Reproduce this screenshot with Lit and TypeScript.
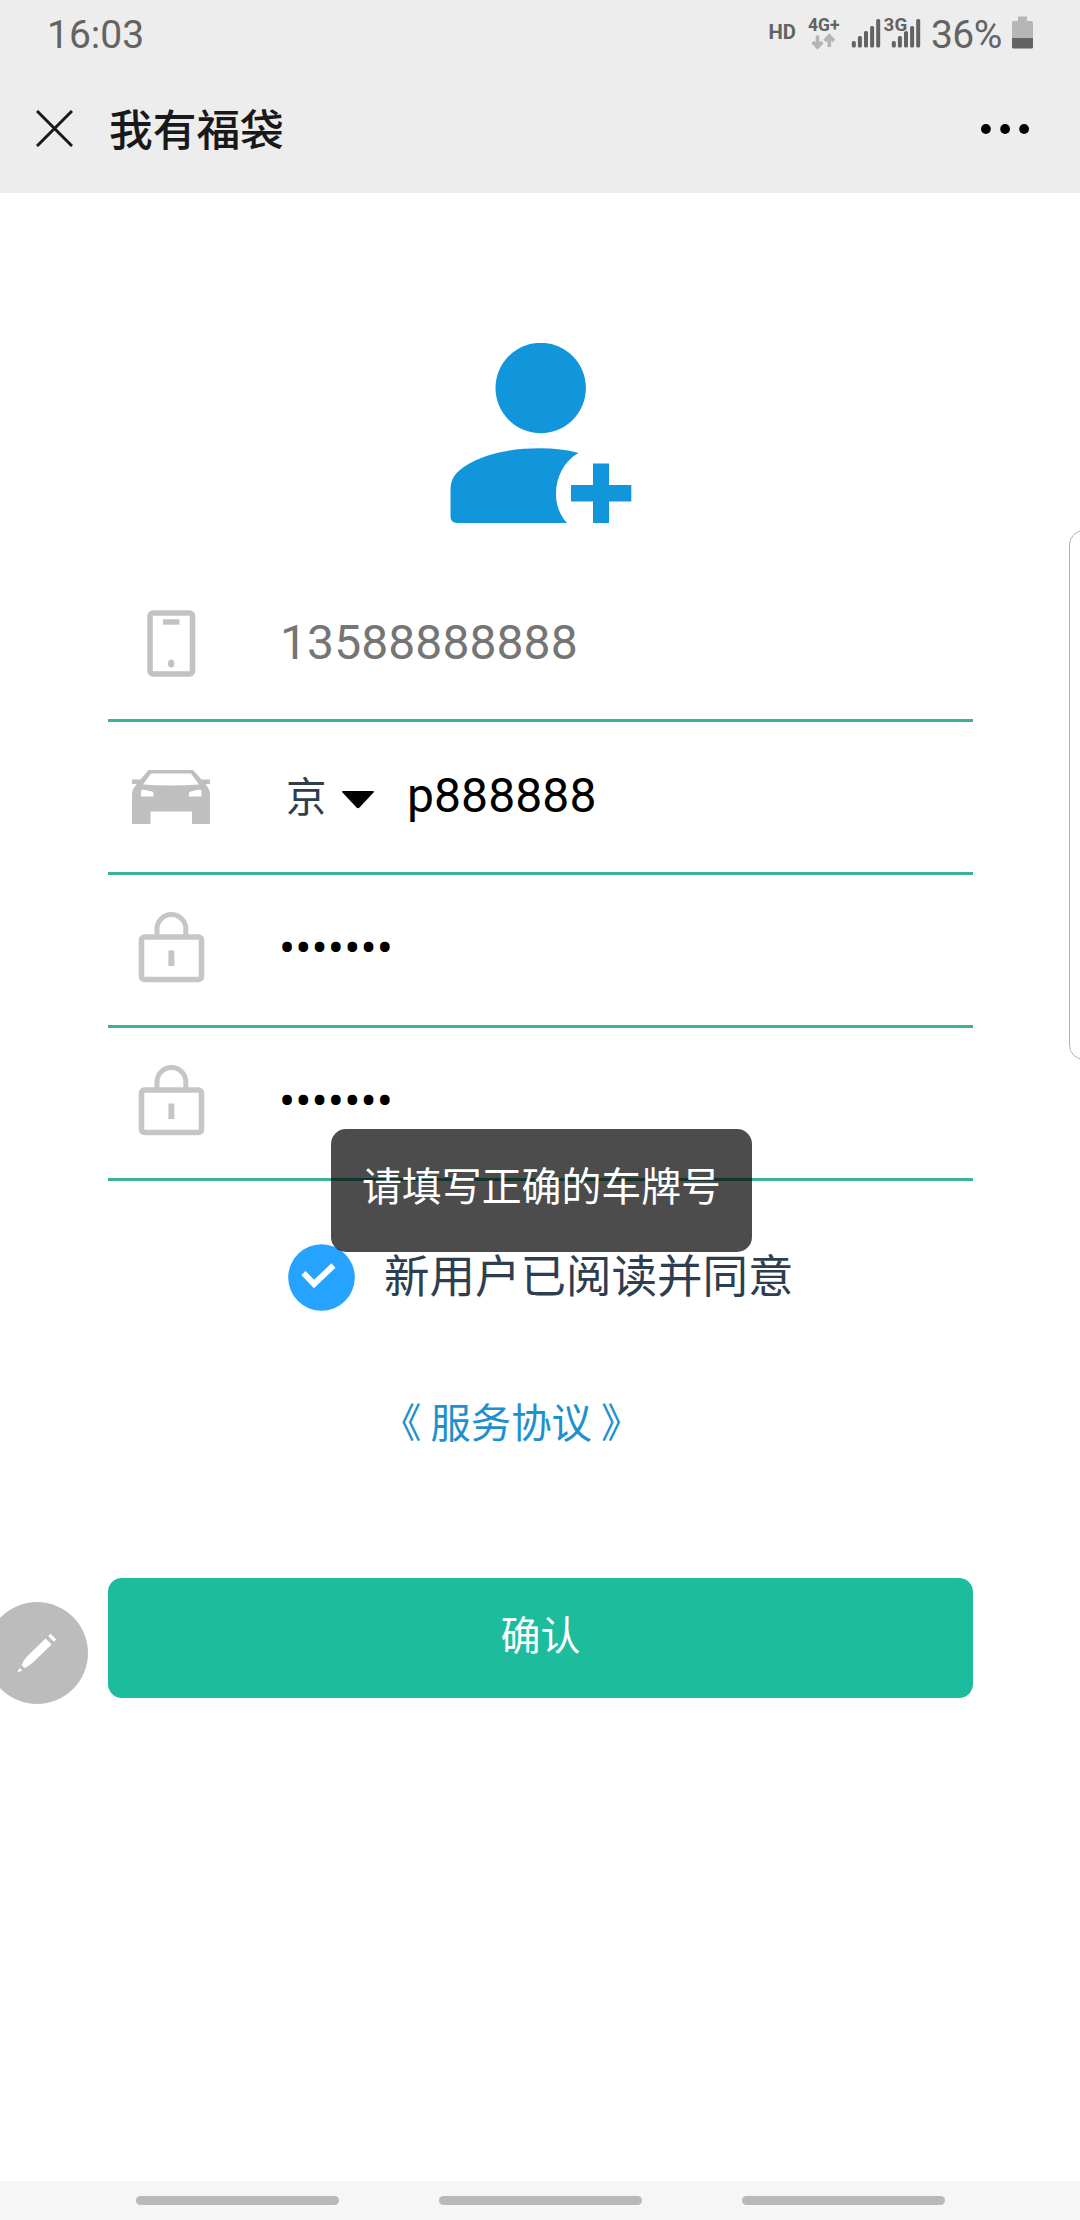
import { LitElement, html, svg, css } from "lit";
import { customElement } from "lit/decorators.js";

const BAR_TOPS = [41, 36, 31, 26, 19];

const signalBars = (x: number) =>
  BAR_TOPS.map(
    (top, i) => svg`<rect x=${x + i * 6.1} y=${top} width="4" height=${47.5 - top} rx="1.6" />`
  );

const phoneIcon = html`<svg class="icon" viewBox="0 0 90 150" fill="none" stroke="#c2c2c2">
  <rect x="24" y="44" width="42.5" height="61" rx="3" stroke-width="5.6" />
  <path d="M37 53h16.5" stroke-width="5.4" />
  <ellipse cx="45.2" cy="94.5" rx="3.2" ry="4" fill="#c2c2c2" stroke="none" />
</svg>`;

const carIcon = html`<svg class="icon" viewBox="0 0 90 150" fill="#bfbfbf">
  <path
    fill-rule="evenodd"
    d="M22.5 48H67L75.5 57.5H84V62H79.5L82.500 66.500Q84 69 84 72V102H66V89.500H24.500V102H6V72Q6 69 7.500 66.500L10.500 62H6V57.500H14.500ZM25 51.500L17 62.500Q30 63.500 45 63.500T73 62.500L65 51.500ZM17 67.500Q15 67.500 15 69.500V74.500H27.500V71.500Q27.500 70 26 69.500ZM73.500 67.500Q75.500 67.500 75.500 69.500V74.500H63V71.500Q63 70 64.500 69.500Z"
  />
</svg>`;

const lockIcon = html`<svg class="icon" viewBox="0 0 90 150" fill="none" stroke="#c6c6c6">
  <rect x="15.5" y="62" width="60" height="42.5" rx="3" stroke-width="5.6" />
  <path d="M31 61V54a14.4 14.4 0 0 1 28.8 0V61" stroke-width="5" />
  <path d="M45.4 75.5V91" stroke-width="6" />
</svg>`;

@customElement("status-bar")
export class StatusBar extends LitElement {
  static styles = css`
    :host {
      display: flex;
      height: 68px;
      padding: 0 47px 0 47px;
      justify-content: space-between;
      font-family: Roboto, sans-serif;
      font-size: 39px;
      line-height: 71px;
      color: #636363;
    }
    .right {
      display: flex;
    }
    .signals {
      width: 160px;
      height: 68px;
      fill: #636363;
    }
    .pct {
      width: 76px;
      margin-left: 5px;
      letter-spacing: -0.6px;
      white-space: nowrap;
    }
    .battery {
      width: 21px;
      height: 68px;
      margin-left: 5px;
    }
  `;

  render() {
    return html`
      <span>16:03</span>
      <div class="right">
        <svg class="signals" viewBox="765 0 160 68" font-family="Roboto, sans-serif" font-weight="700">
          <text x="767.4" y="39" font-size="20" textLength="27.5" lengthAdjust="spacingAndGlyphs">HD</text>
          <text x="807" y="31" font-size="18.2" textLength="31.5" lengthAdjust="spacingAndGlyphs">4G+</text>
          <g fill="none" stroke="#b4b4b4" stroke-width="3.6">
            <path d="M816.5 35.5V46.5M811.8 42L816.5 47L821.2 42" />
            <path d="M828.3 47V36.5M823.6 41L828.3 36L833 41" />
          </g>
          ${signalBars(850.8)} ${signalBars(890.8)}
          <text x="882.6" y="30.6" font-size="18.6" textLength="23.6" lengthAdjust="spacingAndGlyphs" stroke="#ededed" stroke-width="2" paint-order="stroke">3G</text>
        </svg>
        <span class="pct">36%</span>
        <svg class="battery" viewBox="0 0 21 68">
          <path d="M6 16.5H15V21H19.5Q21 21 21 22.5V38H0V22.5Q0 21 1.5 21H6Z" fill="#b6b6b6" />
          <path d="M0 38H21V47Q21 48.5 19.5 48.5H1.5Q0 48.5 0 47Z" fill="#636363" />
        </svg>
      </div>
    `;
  }
}

@customElement("title-bar")
export class TitleBar extends LitElement {
  static styles = css`
    :host {
      display: flex;
      align-items: center;
      height: 121px;
      padding: 0 51px 4px 36px;
    }
    .close {
      width: 37px;
      height: 37px;
    }
    .title {
      flex: 1;
      margin: -3px 0 0 36px;
      font: 500 43.7px/64px "Noto Sans CJK SC", sans-serif;
      color: #191919;
    }
    .more {
      width: 48px;
      height: 10px;
    }
  `;

  render() {
    return html`
      <svg class="close" viewBox="0 0 37 37">
        <path d="M1 1L36 36M36 1L1 36" stroke="#191919" stroke-width="3" />
      </svg>
      <span class="title">我有福袋</span>
      <svg class="more" viewBox="0 0 48 10">
        <circle cx="4.9" cy="5" r="4.9" />
        <circle cx="24.1" cy="5" r="4.9" />
        <circle cx="43.1" cy="5" r="4.9" />
      </svg>
    `;
  }
}

@customElement("app-root")
export class AppRoot extends LitElement {
  static styles = css`
    :host {
      display: flex;
      flex-direction: column;
      position: relative;
      box-sizing: border-box;
      width: 1080px;
      height: 2220px;
      overflow: hidden;
      background: #fff;
      font-family: "Noto Sans CJK SC", sans-serif;
      color: #2c3e50;
    }
    .header {
      height: 193px;
      background: #ededed;
    }
    .main {
      flex: 1;
      display: flex;
      flex-direction: column;
      padding: 150px 107px 0 108px;
    }
    .avatar {
      width: 182px;
      height: 180px;
      align-self: center;
      margin-bottom: 46px;
      fill: #1296db;
    }
    .field {
      display: flex;
      box-sizing: border-box;
      height: 153px;
      padding-left: 18px;
      border-bottom: 3px solid #3ab399;
    }
    .icon {
      width: 90px;
      height: 150px;
    }
    .value {
      margin-left: 64px;
      font-family: Roboto, sans-serif;
      font-size: 48px;
      line-height: 148px;
      letter-spacing: 0.09px;
      color: #000;
    }
    .muted {
      color: #757575;
    }
    .province {
      margin-left: 70px;
      width: 42px;
      font-size: 40.4px;
      line-height: 145px;
    }
    .caret {
      width: 32px;
      height: 18px;
      margin: 69px 0 0 14px;
    }
    .plate {
      margin-left: 33px;
    }
    .dots {
      margin-left: 63px;
      line-height: 147px;
    }
    .agree {
      display: flex;
      align-items: center;
      height: 67px;
      margin: 63px 0 0 180px;
      font-size: 45.5px;
      line-height: 67px;
    }
    .check {
      width: 67px;
      height: 67px;
      margin-right: 29px;
    }
    .agree-text {
      margin-top: -8px;
    }
    .terms {
      margin: 80px 0 0 273px;
      font-size: 40.4px;
      line-height: 60px;
      color: #1d90ce;
      white-space: nowrap;
    }
    .submit {
      height: 120px;
      margin-top: 127px;
      border: 0;
      padding: 0 0 10px;
      border-radius: 14px;
      background: #1cbc9c;
      color: #fff;
      font: 400 40px/110px "Noto Sans CJK SC", sans-serif;
      text-align: center;
    }
    .nav {
      display: flex;
      align-items: center;
      justify-content: center;
      gap: 100px;
      height: 39px;
      background: #f6f6f6;
    }
    .pill {
      width: 203px;
      height: 9px;
      border-radius: 4.5px;
      background: #b9b9b9;
    }
    .toast {
      position: absolute;
      left: 331px;
      top: 1129px;
      box-sizing: border-box;
      width: 421px;
      height: 123px;
      border-radius: 15px;
      background: rgba(0, 0, 0, 0.7);
      color: #fff;
      font-size: 39.9px;
      line-height: 109px;
      text-align: center;
      white-space: nowrap;
    }
    .edge-panel {
      position: absolute;
      left: 1069px;
      top: 530px;
      box-sizing: border-box;
      width: 40px;
      height: 530px;
      border: 1.5px solid #b0b0b0;
      border-radius: 15px;
      background: #fff;
    }
    .pencil {
      position: absolute;
      left: -14px;
      top: 1602px;
      width: 102px;
      height: 102px;
    }
  `;

  render() {
    return html`
      <div class="header">
        <status-bar></status-bar>
        <title-bar></title-bar>
      </div>
      <div class="main">
        <svg class="avatar" viewBox="450 343 182 180">
          <circle cx="540.7" cy="388" r="45.2" />
          <path
            d="M450.5 490C450.5 478 456 472 466 465.500C486 453 512 448.300 540 448.300C554 448.300 567 449.800 578.500 453C564 461 556 477 556 494C556 505 560 515.500 567 523H457Q450.500 523 450.500 516.500Z"
          />
          <path d="M593 463.500H609V485H631.300V501.500H609V523H593V501.500H571V485H593Z" />
        </svg>
        <div class="field">${phoneIcon}<span class="value muted">13588888888</span></div>
        <div class="field">
          ${carIcon}
          <span class="province">京</span>
          <svg class="caret" viewBox="0 0 32 18"><path d="M0 1Q0 0 1 0H31Q32 0 32 1L17.500 16.500Q16 18 14.500 16.500Z" /></svg>
          <span class="value plate">p888888</span>
        </div>
        <div class="field">${lockIcon}<span class="value dots">•••••••</span></div>
        <div class="field">${lockIcon}<span class="value dots">•••••••</span></div>
        <div class="agree">
          <svg class="check" viewBox="0 0 67 67">
            <circle cx="33.500" cy="33.500" r="33.300" fill="#26a2ff" />
            <path d="M15.500 29L26 40L45.500 21.500" fill="none" stroke="#fff" stroke-width="6" />
          </svg>
          <span class="agree-text">新用户已阅读并同意</span>
        </div>
        <div class="terms">《 服务协议 》</div>
        <button class="submit">确认</button>
      </div>
      <div class="nav"><i class="pill"></i><i class="pill"></i><i class="pill"></i></div>
      <div class="toast">请填写正确的车牌号</div>
      <div class="edge-panel"></div>
      <svg class="pencil" viewBox="-14 1602 102 102">
        <circle cx="37" cy="1653" r="51" fill="#bcbcbc" />
        <g fill="#fff">
          <path d="M45.500 1638.500L51.500 1644.500L33 1662.500Q29 1666 24.500 1668L21.500 1665Q23.500 1660 27 1656.500Z" />
          <path d="M48.700 1635.500L50.500 1633.700L56.300 1639.500L54.500 1641.300Q53.800 1641.800 53 1641L49 1637Q48.300 1636.200 48.700 1635.500Z" />
          <path d="M19.500 1668L22.500 1670.500L18 1672.300L17.800 1671.500Z" />
        </g>
      </svg>
    `;
  }
}
